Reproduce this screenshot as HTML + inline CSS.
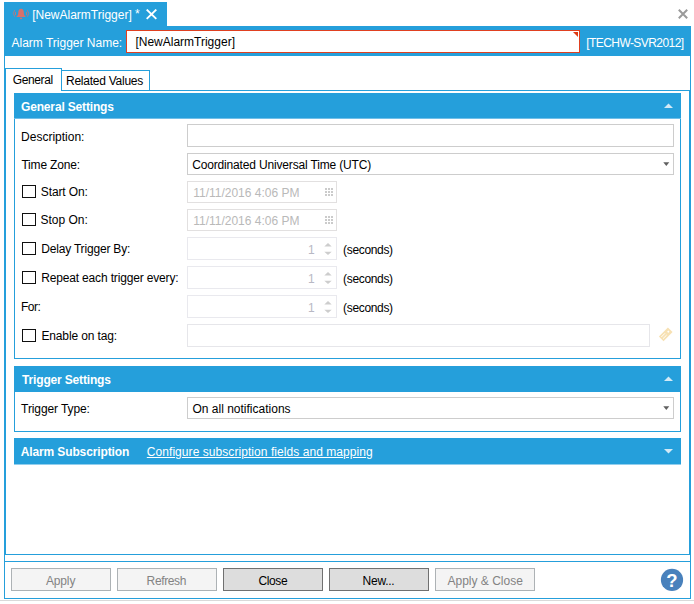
<!DOCTYPE html>
<html><head><meta charset="utf-8"><title>Alarm Trigger</title>
<style>
html,body{margin:0;padding:0;background:#fff;}
#r{position:relative;width:694px;height:604px;overflow:hidden;background:#fff;font-family:"Liberation Sans",sans-serif;}
#r>div,#r>svg,#r>span{position:absolute;display:block;}
.t{font-size:12px;line-height:14px;white-space:pre;}
</style></head><body><div id="r">
<div style="left:4px;top:2px;width:163px;height:24px;background:#259fdb"></div>
<div style="left:4px;top:26px;width:687px;height:30px;background:#259fdb"></div>
<div style="left:4px;top:56px;width:1px;height:543px;background:#259fdb"></div>
<div style="left:690px;top:56px;width:1px;height:543px;background:#259fdb"></div>
<div style="left:4px;top:598px;width:687px;height:1px;background:#259fdb"></div>
<div style="left:5px;top:90px;width:1px;height:465px;background:#259fdb"></div>
<div style="left:689px;top:90px;width:1px;height:465px;background:#259fdb"></div>
<div style="left:61px;top:90px;width:629px;height:1px;background:#259fdb"></div>
<div style="left:4px;top:554px;width:687px;height:1px;background:#259fdb"></div>
<div style="left:4px;top:561px;width:687px;height:1px;background:#259fdb"></div>
<div style="left:5px;top:68px;width:57px;height:1px;background:#259fdb"></div>
<div style="left:5px;top:68px;width:1px;height:23px;background:#259fdb"></div>
<div style="left:61px;top:68px;width:1px;height:23px;background:#259fdb"></div>
<div style="left:61px;top:70px;width:89px;height:1px;background:#259fdb"></div>
<div style="left:149px;top:70px;width:1px;height:21px;background:#259fdb"></div>
<div style="left:126px;top:30px;width:454px;height:23px;background:#fff;border:1px solid #e04020;box-sizing:border-box"></div>
<svg style="left:573px;top:32px" width="5" height="5"><path d="M0 0H5V5Z" fill="#e03a12"/></svg>
<div style="left:14px;top:93px;width:667px;height:266px;border:1px solid #259fdb;box-sizing:border-box"></div>
<div style="left:14px;top:93px;width:667px;height:25px;background:#259fdb"></div>
<div style="left:14px;top:118px;width:667px;height:1px;background:#71bfe8"></div>
<div style="left:14px;top:366px;width:667px;height:66px;border:1px solid #259fdb;box-sizing:border-box"></div>
<div style="left:14px;top:366px;width:667px;height:26px;background:#259fdb"></div>
<div style="left:14px;top:438px;width:667px;height:26px;background:#259fdb"></div>
<div style="left:14px;top:464px;width:667px;height:1px;background:#92ceed"></div>
<svg style="left:664px;top:103px" width="9" height="5"><path d="M0 5L4.5 0.5L9 5Z" fill="#d2e9f6"/></svg>
<svg style="left:664px;top:376px" width="9" height="5"><path d="M0 5L4.5 0.5L9 5Z" fill="#d2e9f6"/></svg>
<svg style="left:664px;top:449px" width="9" height="5"><path d="M0 0L4.5 4.5L9 0Z" fill="#d2e9f6"/></svg>
<div style="left:187px;top:124px;width:487px;height:23px;background:#fff;border:1px solid #cdcdcd;box-sizing:border-box"></div>
<div style="left:187px;top:153px;width:487px;height:22px;background:#fff;border:1px solid #cdcdcd;box-sizing:border-box"></div>
<div style="left:187px;top:181px;width:150px;height:22px;background:#fff;border:1px solid #e2e0e0;box-sizing:border-box"></div>
<div style="left:187px;top:209px;width:150px;height:22px;background:#fff;border:1px solid #e2e0e0;box-sizing:border-box"></div>
<div style="left:187px;top:237px;width:150px;height:23px;background:#fff;border:1px solid #e9e9ee;box-sizing:border-box"></div>
<div style="left:187px;top:266px;width:150px;height:23px;background:#fff;border:1px solid #e9e9ee;box-sizing:border-box"></div>
<div style="left:187px;top:295px;width:150px;height:23px;background:#fff;border:1px solid #e9e9ee;box-sizing:border-box"></div>
<div style="left:187px;top:324px;width:463px;height:23px;background:#fff;border:1px solid #e6e6ea;box-sizing:border-box"></div>
<div style="left:187px;top:397px;width:487px;height:22px;background:#fff;border:1px solid #cdcdcd;box-sizing:border-box"></div>
<svg style="left:663px;top:162px" width="7" height="4"><path d="M0.3 0.2H6.3L3.3 3.9Z" fill="#606060"/></svg>
<svg style="left:663px;top:406px" width="7" height="4"><path d="M0.3 0.2H6.3L3.3 3.9Z" fill="#606060"/></svg>
<svg style="left:325px;top:188px" width="8" height="8" fill="#cbcbcb"><rect x="0" y="0" width="2" height="2"/><rect x="0" y="3" width="2" height="2"/><rect x="0" y="6" width="2" height="2"/><rect x="3" y="0" width="2" height="2"/><rect x="3" y="3" width="2" height="2"/><rect x="3" y="6" width="2" height="2"/><rect x="6" y="0" width="2" height="2"/><rect x="6" y="3" width="2" height="2"/><rect x="6" y="6" width="2" height="2"/></svg>
<svg style="left:325px;top:216px" width="8" height="8" fill="#cbcbcb"><rect x="0" y="0" width="2" height="2"/><rect x="0" y="3" width="2" height="2"/><rect x="0" y="6" width="2" height="2"/><rect x="3" y="0" width="2" height="2"/><rect x="3" y="3" width="2" height="2"/><rect x="3" y="6" width="2" height="2"/><rect x="6" y="0" width="2" height="2"/><rect x="6" y="3" width="2" height="2"/><rect x="6" y="6" width="2" height="2"/></svg>
<svg style="left:324px;top:243px" width="8" height="12"><path d="M0.3 3.5L4 0L7.7 3.5Z M0.3 8.7L4 12L7.7 8.7Z" fill="#cdcdcd"/></svg>
<svg style="left:324px;top:272px" width="8" height="12"><path d="M0.3 3.5L4 0L7.7 3.5Z M0.3 8.7L4 12L7.7 8.7Z" fill="#cdcdcd"/></svg>
<svg style="left:324px;top:301px" width="8" height="12"><path d="M0.3 3.5L4 0L7.7 3.5Z M0.3 8.7L4 12L7.7 8.7Z" fill="#cdcdcd"/></svg>
<div style="left:22px;top:185px;width:14px;height:13px;background:#fff;border:1px solid #101010;box-sizing:border-box"></div>
<div style="left:22px;top:213px;width:14px;height:13px;background:#fff;border:1px solid #101010;box-sizing:border-box"></div>
<div style="left:22px;top:242px;width:14px;height:13px;background:#fff;border:1px solid #101010;box-sizing:border-box"></div>
<div style="left:22px;top:271px;width:14px;height:13px;background:#fff;border:1px solid #101010;box-sizing:border-box"></div>
<div style="left:22px;top:329px;width:14px;height:13px;background:#fff;border:1px solid #101010;box-sizing:border-box"></div>
<svg style="left:655.5px;top:324.2px" width="20" height="20" viewBox="0 0 20 20"><g transform="rotate(-45 10 10)"><rect x="3.2" y="6.7" width="12.8" height="6.6" fill="#f7e1b3"/><circle cx="13.3" cy="10" r="1" fill="#fff"/><path d="M4.6 8.8H9.8M4.6 11.2H9.8" stroke="#fff" stroke-width="0.9"/></g></svg>
<div style="left:11px;top:568px;width:100px;height:23px;background:#f4f4f4;border:1px solid #adb2b5;box-sizing:border-box"></div>
<div style="left:117px;top:568px;width:100px;height:23px;background:#f4f4f4;border:1px solid #adb2b5;box-sizing:border-box"></div>
<div style="left:223px;top:568px;width:100px;height:23px;background:#dddddd;border:1px solid #707070;box-sizing:border-box"></div>
<div style="left:329px;top:568px;width:100px;height:23px;background:#dddddd;border:1px solid #707070;box-sizing:border-box"></div>
<div style="left:435px;top:568px;width:100px;height:23px;background:#f4f4f4;border:1px solid #adb2b5;box-sizing:border-box"></div>
<svg style="left:660px;top:568px" width="24" height="24" viewBox="0 0 24 24"><circle cx="12" cy="11.9" r="11.1" fill="#4981bc"/><text x="11.9" y="18.8" text-anchor="middle" font-family="Liberation Sans, sans-serif" font-weight="700" font-size="18.5" fill="#fff">?</text></svg>
<svg style="left:678px;top:9px" width="10" height="10" viewBox="0 0 10 10"><path d="M0.8 0.8L9.2 9.2M9.2 0.8L0.8 9.2" stroke="#9a9a9a" stroke-width="2" fill="none"/></svg>
<svg style="left:146.1px;top:8.9px" width="11" height="11" viewBox="0 0 11 11"><path d="M0.7 0.6L10.3 9.9M10.3 0.6L0.7 9.9" stroke="#fff" stroke-width="1.9" fill="none"/></svg>
<svg style="left:12px;top:7px" width="19" height="14" viewBox="0 0 19 14"><path d="M9.06 1.8C7 1.8 6.3 3.6 6.3 5.5C6.3 7.7 5.7 8.8 4.5 9.5V10.1H13.6V9.5C12.4 8.8 11.8 7.7 11.8 5.5C11.8 3.6 11.1 1.8 9.06 1.8Z M7.9 10.8H10.2V11.2A1.1 0.9 0 0 1 7.9 11.2Z" fill="#da706b"/><path d="M3.5 4.9V8.1 M14.6 4.9V8.1" stroke="#da706b" stroke-width="0.9" fill="none" opacity="0.9"/><path d="M2.7 3.1Q0 6.4 2.7 9.7 M15.4 3.1Q18.1 6.4 15.4 9.7" stroke="#da706b" stroke-width="0.9" fill="none" opacity="0.8"/></svg>
<div style="left:0px;top:600px;width:694px;height:1px;background:#d9d9d9"></div>
<span class="t" style="left:32.2px;top:8px;color:#fff;font-weight:400;letter-spacing:0.0px;">[NewAlarmTrigger] <span style="position:relative;top:-1px">*</span></span>
<span class="t" style="left:11.5px;top:36px;color:#fff;font-weight:400;letter-spacing:0.0px;">Alarm Trigger Name:</span>
<span class="t" style="left:135.4px;top:35px;color:#000;font-weight:400;letter-spacing:0.0px;">[NewAlarmTrigger]</span>
<span class="t" style="left:586.2px;top:36px;color:#fff;font-weight:400;letter-spacing:-0.56px;">[TECHW-SVR2012]</span>
<span class="t" style="left:12.7px;top:73px;color:#000;font-weight:400;letter-spacing:-0.37px;">General</span>
<span class="t" style="left:66.0px;top:74px;color:#000;font-weight:400;letter-spacing:-0.25px;">Related Values</span>
<span class="t" style="left:21.0px;top:100px;color:#fff;font-weight:700;letter-spacing:-0.16px;">General Settings</span>
<span class="t" style="left:21.1px;top:130px;color:#000;font-weight:400;letter-spacing:0.0px;">Description:</span>
<span class="t" style="left:21.4px;top:158px;color:#000;font-weight:400;letter-spacing:-0.18px;">Time Zone:</span>
<span class="t" style="left:192.2px;top:158px;color:#000;font-weight:400;letter-spacing:-0.16px;">Coordinated Universal Time (UTC)</span>
<span class="t" style="left:40.8px;top:185px;color:#000;font-weight:400;letter-spacing:-0.11px;">Start On:</span>
<span class="t" style="left:193.2px;top:186px;color:#b9b9b9;font-weight:400;letter-spacing:0.0px;">11/11/2016 4:06 PM</span>
<span class="t" style="left:40.5px;top:213px;color:#000;font-weight:400;letter-spacing:0.0px;">Stop On:</span>
<span class="t" style="left:193.2px;top:214px;color:#b9b9b9;font-weight:400;letter-spacing:0.0px;">11/11/2016 4:06 PM</span>
<span class="t" style="left:41.2px;top:242px;color:#000;font-weight:400;letter-spacing:-0.18px;">Delay Trigger By:</span>
<span class="t" style="left:307.9px;top:243px;color:#b8b8c4;font-weight:400;letter-spacing:0.0px;">1</span>
<span class="t" style="left:343.1px;top:243px;color:#000;font-weight:400;letter-spacing:-0.34px;">(seconds)</span>
<span class="t" style="left:41.2px;top:271px;color:#000;font-weight:400;letter-spacing:-0.16px;">Repeat each trigger every:</span>
<span class="t" style="left:307.9px;top:272px;color:#b8b8c4;font-weight:400;letter-spacing:0.0px;">1</span>
<span class="t" style="left:343.1px;top:272px;color:#000;font-weight:400;letter-spacing:-0.34px;">(seconds)</span>
<span class="t" style="left:21.0px;top:300px;color:#000;font-weight:400;letter-spacing:-0.47px;">For:</span>
<span class="t" style="left:307.9px;top:301px;color:#b8b8c4;font-weight:400;letter-spacing:0.0px;">1</span>
<span class="t" style="left:343.1px;top:301px;color:#000;font-weight:400;letter-spacing:-0.34px;">(seconds)</span>
<span class="t" style="left:41.4px;top:329px;color:#000;font-weight:400;letter-spacing:-0.13px;">Enable on tag:</span>
<span class="t" style="left:22.1px;top:373px;color:#fff;font-weight:700;letter-spacing:-0.17px;">Trigger Settings</span>
<span class="t" style="left:21.1px;top:402px;color:#000;font-weight:400;letter-spacing:-0.1px;">Trigger Type:</span>
<span class="t" style="left:192.5px;top:402px;color:#000;font-weight:400;letter-spacing:0.0px;">On all notifications</span>
<span class="t" style="left:20.7px;top:445px;color:#fff;font-weight:700;letter-spacing:-0.12px;">Alarm Subscription</span>
<span class="t" style="left:146.8px;top:445px;color:#fff;font-weight:400;letter-spacing:0.06px;text-decoration:underline;text-underline-offset:1px;">Configure subscription fields and mapping</span>
<span class="t" style="left:46.0px;top:574px;color:#838383;font-weight:400;letter-spacing:-0.16px;">Apply</span>
<span class="t" style="left:146.6px;top:574px;color:#838383;font-weight:400;letter-spacing:-0.38px;">Refresh</span>
<span class="t" style="left:258.6px;top:574px;color:#000;font-weight:400;letter-spacing:-0.43px;">Close</span>
<span class="t" style="left:362.6px;top:574px;color:#000;font-weight:400;letter-spacing:-0.26px;">New...</span>
<span class="t" style="left:447.5px;top:574px;color:#838383;font-weight:400;letter-spacing:0.0px;">Apply &amp; Close</span>
</div></body></html>
